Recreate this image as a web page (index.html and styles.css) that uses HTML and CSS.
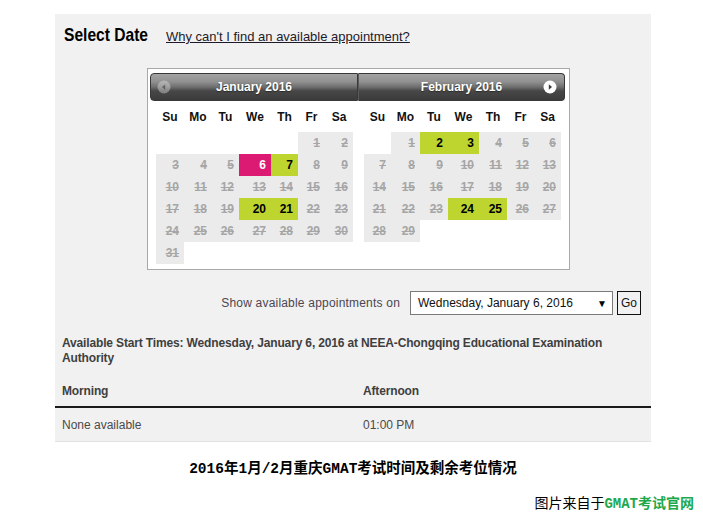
FILE: index.html
```html
<!DOCTYPE html>
<html lang="en">
<head>
<meta charset="utf-8">
<title>Select Date</title>
<link rel="stylesheet" href="styles.css">
</head>
<body>
<div class="panel">
  <div class="title-row">
    <h1 class="title"><span class="title-text">Select Date</span></h1>
    <a class="help-link" href="#">Why can't I find an available appointment?</a>
  </div>

  <div class="calendar">
    <div class="month month-first">
      <div class="month-head head-left">
        <span class="nav nav-prev">
          <svg width="14" height="14" viewBox="0 0 14 14"><circle cx="7" cy="7" r="6.5" fill="#e6e6e6"/><path d="M8.2 4.3 L5 7 L8.2 9.7 Z" fill="#555"/></svg>
        </span>
        <span class="month-name">January 2016</span>
      </div>
      <table class="days">
        <colgroup><col class="c-su"><col class="c-mo"><col class="c-tu"><col class="c-we"><col class="c-th"><col class="c-fr"><col class="c-sa"></colgroup>
        <thead>
          <tr><th>Su</th><th>Mo</th><th>Tu</th><th>We</th><th>Th</th><th>Fr</th><th>Sa</th></tr>
        </thead>
        <tbody>
          <tr><td class="blank"></td><td class="blank"></td><td class="blank"></td><td class="blank"></td><td class="blank"></td><td class="off">1</td><td class="off">2</td></tr>
          <tr><td class="off">3</td><td class="off">4</td><td class="off">5</td><td class="picked">6</td><td class="open">7</td><td class="off">8</td><td class="off">9</td></tr>
          <tr><td class="off">10</td><td class="off">11</td><td class="off">12</td><td class="off">13</td><td class="off">14</td><td class="off">15</td><td class="off">16</td></tr>
          <tr><td class="off">17</td><td class="off">18</td><td class="off">19</td><td class="open">20</td><td class="open">21</td><td class="off">22</td><td class="off">23</td></tr>
          <tr><td class="off">24</td><td class="off">25</td><td class="off">26</td><td class="off">27</td><td class="off">28</td><td class="off">29</td><td class="off">30</td></tr>
          <tr><td class="off">31</td><td class="blank"></td><td class="blank"></td><td class="blank"></td><td class="blank"></td><td class="blank"></td><td class="blank"></td></tr>
        </tbody>
      </table>
    </div>

    <div class="month month-second">
      <div class="month-head head-right">
        <span class="month-name">February 2016</span>
        <span class="nav nav-next">
          <svg width="14" height="14" viewBox="0 0 14 14"><circle cx="7" cy="7" r="6.5" fill="#ffffff"/><path d="M5.8 4.3 L9 7 L5.8 9.7 Z" fill="#3a3a3a"/></svg>
        </span>
      </div>
      <table class="days">
        <colgroup><col class="c-su2"><col class="c-mo2"><col class="c-tu2"><col class="c-we2"><col class="c-th2"><col class="c-fr2"><col class="c-sa2"></colgroup>
        <thead>
          <tr><th>Su</th><th>Mo</th><th>Tu</th><th>We</th><th>Th</th><th>Fr</th><th>Sa</th></tr>
        </thead>
        <tbody>
          <tr><td class="blank"></td><td class="off">1</td><td class="open">2</td><td class="open">3</td><td class="off">4</td><td class="off">5</td><td class="off">6</td></tr>
          <tr><td class="off">7</td><td class="off">8</td><td class="off">9</td><td class="off">10</td><td class="off">11</td><td class="off">12</td><td class="off">13</td></tr>
          <tr><td class="off">14</td><td class="off">15</td><td class="off">16</td><td class="off">17</td><td class="off">18</td><td class="off">19</td><td class="off">20</td></tr>
          <tr><td class="off">21</td><td class="off">22</td><td class="off">23</td><td class="open">24</td><td class="open">25</td><td class="off">26</td><td class="off">27</td></tr>
          <tr><td class="off">28</td><td class="off">29</td><td class="blank"></td><td class="blank"></td><td class="blank"></td><td class="blank"></td><td class="blank"></td></tr>
        </tbody>
      </table>
    </div>
  </div>

  <div class="show-row">
    <span class="show-label">Show available appointments on</span>
    <div class="date-select">
      <span class="date-value">Wednesday, January 6, 2016</span>
      <span class="caret">&#9660;</span>
    </div>
    <button class="go" type="button">Go</button>
  </div>

  <div class="times">
    <p class="times-title">Available Start Times: Wednesday, January 6, 2016 at NEEA-Chongqing Educational Examination Authority</p>
    <table class="slots">
      <thead>
        <tr><th class="col-am">Morning</th><th>Afternoon</th></tr>
      </thead>
      <tbody>
        <tr><td>None available</td><td>01:00 PM</td></tr>
      </tbody>
    </table>
  </div>
</div>

<p class="caption">2016年1月/2月重庆GMAT考试时间及剩余考位情况</p>
<p class="credit">图片来自于<b class="credit-src">GMAT考试官网</b></p>
</body>
</html>
```

FILE: styles.css
```css
html, body {
  margin: 0;
  padding: 0;
  background: #ffffff;
}

body {
  font-family: "Liberation Sans", Arial, sans-serif;
  font-size: 12px;
  color: #222;
}

.panel {
  margin: 14px 0 0 55px;
  width: 596px;
  background: #f1f1f1;
}

/* title */
.title-row {
  display: flex;
  align-items: baseline;
  gap: 18px;
  padding: 10px 0 0 9px;
  line-height: 22px;
}

.title {
  margin: 0;
  font-size: 19px;
  font-weight: bold;
  color: #000;
  display: inline-block;
  width: 84px;
  white-space: nowrap;
}

.title-text {
  display: inline-block;
  transform: scaleX(0.82);
  transform-origin: 0 50%;
}

.help-link {
  font-size: 13px;
  color: #1f1a2a;
  text-decoration: underline;
}

/* calendar */
.calendar {
  display: flex;
  align-items: flex-start;
  margin: 20px 0 0 92px;
  width: 417px;
  padding: 4px 2px 5px 2px;
  background: #ffffff;
  border: 1px solid #a9a9a9;
}

.month-first {
  width: 208px;
}

.month-second {
  width: 207px;
}

.month-head {
  position: relative;
  height: 26px;
  border: 1px solid #383838;
  background: linear-gradient(#a4a4a4 0%, #909090 30%, #6e6e6e 50%, #474747 65%, #3b3b3b 100%);
  color: #ffffff;
  font-weight: bold;
  font-size: 12px;
  line-height: 26px;
  text-align: center;
  text-shadow: 0 1px 1px #2a2a2a;
}

.head-left {
  border-radius: 4px 0 0 4px;
}

.head-right {
  border-left: 1px solid #5a5a5a;
  border-radius: 0 4px 4px 0;
}

.nav {
  position: absolute;
  top: 6px;
  width: 14px;
  height: 14px;
  line-height: 0;
}

.nav-prev {
  left: 6px;
  opacity: 0.4;
}

.nav-next {
  right: 7px;
}

.days {
  width: 197px;
  margin-left: 6px;
  table-layout: fixed;
  border-collapse: collapse;
  border-spacing: 0;
}

.c-su { width: 28px; }
.c-mo { width: 28px; }
.c-tu { width: 27px; }
.c-we { width: 32px; }
.c-th { width: 27px; }
.c-fr { width: 27px; }
.c-sa { width: 28px; }

.c-su2 { width: 27px; }
.c-mo2 { width: 29px; }
.c-tu2 { width: 28px; }
.c-we2 { width: 31px; }
.c-th2 { width: 28px; }
.c-fr2 { width: 27px; }
.c-sa2 { width: 27px; }

.days th {
  height: 31px;
  padding: 0;
  font-size: 12px;
  font-weight: bold;
  color: #111;
  text-align: center;
  vertical-align: middle;
}

.days td {
  height: 22px;
  padding: 0 5px 0 0;
  font-size: 12px;
  font-weight: bold;
  text-align: right;
  line-height: 22px;
}

.days td.off {
  background: #ebebeb;
  color: #a6a6a6;
  text-decoration: line-through;
}

.days td.open {
  background: #bed52f;
  color: #000;
}

.days td.picked {
  background: #dc1a73;
  color: #ffffff;
}

.days td.blank {
  background: #ffffff;
}

/* date chooser row */
.show-row {
  display: flex;
  justify-content: flex-end;
  align-items: center;
  margin-top: 21px;
  padding-right: 10px;
}

.show-label {
  margin-right: 10px;
  color: #4b4650;
  font-size: 12px;
  letter-spacing: 0.2px;
}

.date-select {
  display: flex;
  align-items: center;
  justify-content: space-between;
  box-sizing: border-box;
  width: 203px;
  height: 24px;
  padding: 0 5px 0 7px;
  background: #ffffff;
  border: 1px solid #7a7a7a;
  font-size: 12px;
  color: #111;
}

.caret {
  font-size: 10px;
  color: #000;
}

.go {
  box-sizing: border-box;
  margin-left: 4px;
  width: 24px;
  height: 24px;
  padding: 0;
  background: #f1f1f1;
  border: 1px solid #111;
  font-family: "Liberation Sans", Arial, sans-serif;
  font-size: 12px;
  color: #111;
}

/* start times */
.times {
  padding-top: 21px;
}

.times-title {
  margin: 0;
  padding: 0 7px;
  font-size: 12px;
  font-weight: bold;
  line-height: 15px;
  color: #3f3f3f;
  letter-spacing: -0.15px;
}

.slots {
  width: 100%;
  margin-top: 10px;
  border-collapse: collapse;
  border-spacing: 0;
}

.slots th {
  height: 30px;
  padding: 0 7px;
  text-align: left;
  font-size: 12px;
  font-weight: bold;
  color: #3f3f3f;
  letter-spacing: -0.15px;
  border-bottom: 2px solid #1a1a1a;
}

.slots th.col-am {
  width: 287px;
}

.slots td {
  height: 33px;
  padding: 0 7px;
  font-size: 12px;
  color: #4a4a4a;
  border-bottom: 1px solid #e2e2e2;
}

/* captions */
.caption {
  margin: 17px 0 0 0;
  width: 706px;
  text-align: center;
  font-family: "Liberation Mono", "Noto Sans CJK SC", monospace;
  font-size: 14.5px;
  font-weight: bold;
  line-height: 20px;
  color: #000;
}

.credit {
  margin: 15px 0 0 0;
  padding-right: 9px;
  text-align: right;
  font-family: "Liberation Mono", "Noto Sans CJK SC", monospace;
  font-size: 14px;
  line-height: 20px;
  color: #000;
}

.credit-src {
  color: #1ea84c;
  font-weight: bold;
}
```
